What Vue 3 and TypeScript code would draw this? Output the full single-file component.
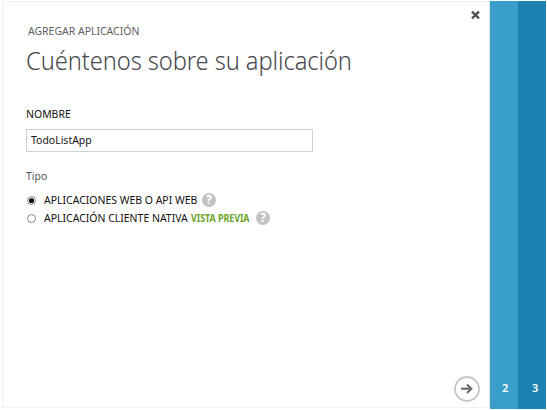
<script setup lang="ts">
import { ref } from 'vue'

interface AppType {
  id: string
  label: string
  badge?: string
}

const name = ref('TodoListApp')
const selected = ref('web')
const types: AppType[] = [
  { id: 'web', label: 'APLICACIONES WEB O API WEB' },
  { id: 'native', label: 'APLICACIÓN CLIENTE NATIVA', badge: 'VISTA PREVIA' },
]
</script>

<template>
  <div class="wizard">
    <main class="panel">
      <header class="head">
        <div class="titles">
          <p class="eyebrow">AGREGAR APLICACIÓN</p>
          <h1 class="title">Cuéntenos sobre su aplicación</h1>
        </div>
        <button class="close" aria-label="Cerrar">
          <svg width="9" height="8" viewBox="0 0 9 8">
            <path d="M1 0.6 L8 7.4 M8 0.6 L1 7.4" stroke="#505050" stroke-width="2.4" />
          </svg>
        </button>
      </header>

      <label class="label" for="app-name">NOMBRE</label>
      <div class="field">
        <input id="app-name" v-model="name" class="input" type="text" spellcheck="false" />
      </div>

      <p class="kind">Tipo</p>
      <div class="options">
        <div v-for="t in types" :key="t.id" class="option" @click="selected = t.id">
          <svg class="radio" width="9" height="9" viewBox="0 0 9 9">
            <circle cx="4.5" cy="4.5" r="4" fill="#fff" stroke="#858585" />
            <circle v-if="selected === t.id" cx="4.5" cy="4.5" r="2.6" fill="#111" />
          </svg>
          <span class="option-label" :class="t.id">{{ t.label }}</span>
          <span v-if="t.badge" class="badge">{{ t.badge }}</span>
          <span class="help" :class="t.id">?</span>
        </div>
      </div>

      <footer class="foot">
        <button class="next" aria-label="Siguiente">
          <svg width="26" height="26" viewBox="0 0 26 26" fill="none">
            <circle cx="13" cy="13" r="12" stroke="#c4c4c4" stroke-width="1.8" />
            <path d="M7 12.7 H17" stroke="#6c6c6c" stroke-width="2.2" />
            <path d="M13 8.4 L17.3 12.7 L13 17" stroke="#6c6c6c" stroke-width="2.1" />
          </svg>
        </button>
      </footer>
    </main>
    <aside class="step second">2</aside>
    <aside class="step third">3</aside>
  </div>
</template>

<style>
body {
  margin: 0;
  background: #fff;
}
</style>

<style scoped>
.wizard {
  display: flex;
  box-sizing: border-box;
  width: 547px;
  height: 410px;
  padding: 1px 1px 1px 2px;
  overflow: hidden;
  background: #fff;
  font-family: 'Noto Sans', 'Open Sans', sans-serif;
}
.panel {
  display: flex;
  flex-direction: column;
  box-sizing: border-box;
  width: 488px;
  height: 407px;
  padding-left: 23px;
  border: 1px solid #f2f2f2;
  border-right-color: #e4e8ea;
}
.head {
  display: flex;
  justify-content: space-between;
  height: 102px;
}
.eyebrow,
.title,
.label,
.input,
.kind,
.option-label,
.badge {
  transform: scaleX(0.91);
  transform-origin: 0 50%;
}
.eyebrow {
  margin: 21px 0 0 2px;
  font-size: 11.5px;
  line-height: 16px;
  color: #606060;
}
.title {
  margin: 3px 0 0;
  font-size: 26px;
  line-height: 36px;
  font-weight: 300;
  letter-spacing: -0.07px;
  white-space: nowrap;
  color: #46474c;
}
.close {
  display: flex;
  height: 8px;
  margin: 9px 9px 0 0;
  padding: 0;
  border: 0;
  background: none;
}
.label {
  height: 16px;
  font-size: 11.5px;
  line-height: 20px;
  color: #111;
}
.field {
  display: flex;
  box-sizing: border-box;
  width: 287px;
  height: 23px;
  margin: 9px 0 0;
  padding: 0 0 3px 4px;
  border: 1px solid #d0d0d0;
}
.input {
  width: 280px;
  padding: 0;
  border: 0;
  outline: 0;
  background: none;
  font: 11.5px 'Noto Sans', 'Open Sans', sans-serif;
  color: #111;
}
.kind {
  margin: 16px 0 0;
  font-size: 11.5px;
  line-height: 16px;
  color: #555;
}
.options {
  margin-top: 7px;
}
.option {
  display: flex;
  align-items: center;
  height: 18px;
  padding-left: 1px;
}
.option-label {
  flex: none;
  margin-left: 7.5px;
  font-size: 11.5px;
  line-height: 18px;
  white-space: nowrap;
  color: #111;
}
.option-label.web {
  width: 153.5px;
}
.option-label.native {
  width: 143.5px;
}
.badge {
  flex: none;
  width: 59px;
  margin-left: 3.5px;
  font-size: 9.8px;
  font-weight: 700;
  letter-spacing: -0.05px;
  white-space: nowrap;
  color: #6aa52a;
}
.help {
  width: 14px;
  height: 14px;
  margin-left: 5px;
  border-radius: 50%;
  background: #c3c3c3;
  color: #fff;
  font-size: 12.5px;
  font-weight: 700;
  line-height: 14px;
  text-align: center;
}
.help.native {
  margin-left: 6.5px;
}
.foot {
  display: flex;
  justify-content: flex-end;
  margin-top: auto;
  padding: 0 9px 5px 0;
}
.next {
  display: flex;
  padding: 0;
  border: 0;
  background: none;
}
.step {
  display: flex;
  align-items: flex-end;
  box-sizing: border-box;
  height: 408px;
  padding-bottom: 13px;
  font-size: 11px;
  line-height: 16px;
  font-weight: 600;
  color: #fff;
}
.second {
  width: 28px;
  padding-left: 12px;
  background: #3a9ecb;
}
.third {
  width: 28px;
  padding-left: 14px;
  background: #1e82b1;
}
</style>
